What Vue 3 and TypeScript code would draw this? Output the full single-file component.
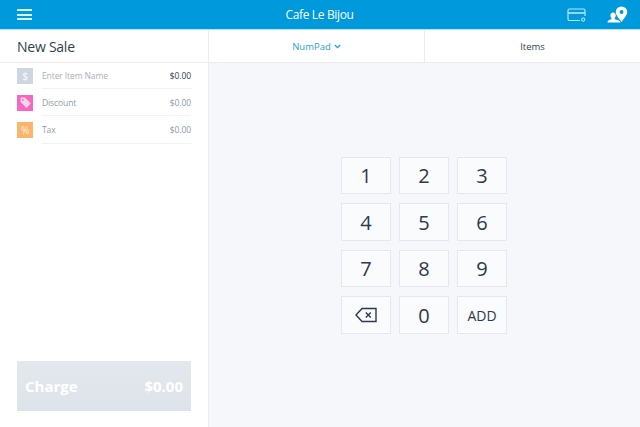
<script setup lang="ts">
interface Line { key: string; label: string; amount: string; cls: string }
const lines: Line[] = [
  { key: 'item', label: 'Enter Item Name', amount: '$0.00', cls: 'item' },
  { key: 'discount', label: 'Discount', amount: '$0.00', cls: 'discount' },
  { key: 'tax', label: 'Tax', amount: '$0.00', cls: 'tax' },
]
const keys = ['1', '2', '3', '4', '5', '6', '7', '8', '9', 'back', '0', 'ADD']
</script>

<template>
  <div class="app">
    <header class="topbar">
      <button class="burger" aria-label="Menu"><span></span><span></span><span></span></button>
      <div class="title">Cafe Le Bijou</div>
      <div class="top-icons">
        <svg width="19" height="14" viewBox="0 0 19 14" fill="none">
          <path d="M13 12.5H2.5A1.5 1.5 0 0 1 1 11V2.5A1.5 1.5 0 0 1 2.5 1h14A1.5 1.5 0 0 1 18 2.5V8" stroke="#b5e8fd" stroke-width="1.2"/>
          <path d="M1 4.2h17v1.6H1z" fill="#b5e8fd"/>
          <circle cx="16.2" cy="11.6" r="1.6" stroke="#b5e8fd" stroke-width="1.1"/>
        </svg>
        <svg width="21" height="17" viewBox="0 0 21 17">
          <path d="M0.5 16.5c0-1.9 1.4-2.4 2.9-3 1.2-.4 1.4-1 1-1.6-.6-.7-1-1.6-1-2.6 0-1.7 1.1-2.9 2.7-2.9s2.7 1.2 2.7 2.9c0 1-.4 1.9-1 2.6-.4.6-.2 1.2 1 1.6 1.5.6 4.7 1.1 4.7 3z" fill="#fff"/>
          <path fill-rule="evenodd" d="M14.5 0.4a5.7 5.7 0 0 1 5.7 5.7c0 3.5-3.5 6.5-5.7 10-2.2-3.500-5.700-6.500-5.700-10a5.700 5.700 0 0 1 5.700-5.700zm0 3.700a2 2 0 1 0 0 4 2 2 0 0 0 0-4z" fill="#fff" stroke="#0099dc" stroke-width="0.9" paint-order="stroke"/>
        </svg>
      </div>
    </header>
    <div class="body">
      <aside class="side">
        <div class="side-head">New Sale</div>
        <ul class="lines">
          <li v-for="l in lines" :key="l.key" class="line" :class="'row-' + l.key">
            <span class="badge" :class="l.cls">
              <template v-if="l.key === 'item'">$</template>
              <svg v-else-if="l.key === 'discount'" width="11" height="11" viewBox="0 0 11 11">
                <path fill-rule="evenodd" d="M1 0.6h4l5.4 5.4a.8.8 0 0 1 0 1.1L7.1 10.4a.8.8 0 0 1-1.1 0L0.6 5V1a.4.4 0 0 1 .4-.4zM2.9 2a.9.9 0 1 0 0 1.8.9.9 0 0 0 0-1.8z" fill="#fbd3ea"/>
              </svg>
              <template v-else>%</template>
            </span>
            <div class="line-main" :class="{ first: l.key === 'item' }">
              <span class="label">{{ l.label }}</span>
              <span class="amount">{{ l.amount }}</span>
            </div>
          </li>
        </ul>
        <button class="charge"><span>Charge</span><span>$0.00</span></button>
      </aside>
      <main class="main">
        <nav class="tabs">
          <div class="tab active">
            NumPad
            <svg width="7" height="5" viewBox="0 0 7 5" fill="none"><path d="M.8 1l2.7 2.7L6.2 1" stroke="#2a9ed6" stroke-width="1.3"/></svg>
          </div>
          <div class="tab">Items</div>
        </nav>
        <div class="pad-wrap">
          <div class="pad">
            <button v-for="k in keys" :key="k" class="key" :class="{ word: k === 'ADD' }">
              <svg v-if="k === 'back'" width="22" height="16" viewBox="0 0 22 16" fill="none">
                <path d="M7 1.500h14v13H7L1 8z" stroke="#2c3a49" stroke-width="1.4" stroke-linejoin="miter"/>
                <path d="M10.800 5.400l5 5M15.800 5.400l-5 5" stroke="#2c3a49" stroke-width="1.4"/>
              </svg>
              <template v-else>{{ k }}</template>
            </button>
          </div>
        </div>
      </main>
    </div>
  </div>
</template>

<style>
html, body { margin: 0; padding: 0; }
</style>

<style scoped>
.app {
  width: 640px;
  height: 427px;
  display: flex;
  flex-direction: column;
  overflow: hidden;
  background: #fff;
  font-family: "Open Sans", "Noto Sans", sans-serif;
  color: #2c3a49;
}
.topbar {
  height: 29px;
  flex: none;
  background: #0099dc;
  border-bottom: 1px solid #b5e4f8;
  display: grid;
  grid-template-columns: 1fr auto 1fr;
  align-items: center;
  padding: 0 12px 0 17px;
}
.burger {
  width: 15px;
  height: 11px;
  padding: 0;
  border: 0;
  background: none;
  display: flex;
  flex-direction: column;
  justify-content: space-between;
}
.burger span { display: block; height: 2px; background: #d6f3ff; }
.title {
  color: #fff;
  font-size: 12px;
  letter-spacing: -0.35px;
  margin-right: 6px;
}
.top-icons {
  display: flex;
  align-items: center;
  justify-content: flex-end;
  gap: 21px;
}
.body { flex: 1; display: flex; min-height: 0; }
.side {
  width: 209px;
  flex: none;
  box-sizing: border-box;
  display: flex;
  flex-direction: column;
  border-right: 1px solid #e9edf2;
}
.side-head {
  height: 32px;
  flex: none;
  padding-left: 17px;
  display: flex;
  align-items: center;
  font-size: 14px;
  letter-spacing: -0.25px;
  color: #333f4d;
  border-bottom: 1px solid #e9edf2;
}
.lines { list-style: none; margin: 0; padding: 0 17px; flex: 1; }
.line { display: flex; box-sizing: border-box; align-items: center; gap: 9px; }
.row-item { height: 26px; }
.row-discount { height: 27px; }
.row-tax { height: 28px; }
.badge {
  width: 16px;
  height: 16px;
  flex: none;
  display: flex;
  align-items: center;
  justify-content: center;
  font-size: 10px;
  font-weight: 600;
  color: #f3f5f8;
}
.badge.item { background: #cdd6e1; }
.badge.discount { background: #f767bd; }
.badge.tax { background: #fbb56a; color: #fde3c5; }
.line-main {
  flex: 1;
  align-self: stretch;
  display: flex;
  align-items: center;
  justify-content: space-between;
  border-bottom: 1px solid #f0f2f5;
  box-sizing: border-box;
  font-size: 8.5px;
  letter-spacing: -0.1px;
}
.label { color: #8e99a6; }
.amount { color: #8e99a6; }
.line-main.first .label { color: #a7b0bb; }
.line-main.first .amount { color: #36414e; }
.charge {
  flex: none;
  margin: 0 17px 16px;
  height: 50px;
  border: 0;
  padding: 0 8px;
  background: linear-gradient(#e4e8ee, #dde3ea);
  color: #fff;
  font: 700 15px "Open Sans", sans-serif;
  display: flex;
  align-items: center;
  justify-content: space-between;
}
.main { flex: 1; display: flex; flex-direction: column; min-width: 0; background: #f5f7fb; }
.tabs {
  height: 32px;
  flex: none;
  display: flex;
  background: #fff;
  border-bottom: 1px solid #e9edf2;
}
.tab {
  flex: 1;
  display: flex;
  align-items: center;
  justify-content: center;
  gap: 3px;
  font-size: 9.5px;
  color: #333f4d;
}
.tab.active { color: #2a9ed6; border-right: 1px solid #e9edf2; }
.pad-wrap { flex: 1; display: flex; align-items: center; justify-content: center; padding-right: 1px; }
.pad {
  display: grid;
  grid-template-columns: repeat(3, 50px);
  grid-auto-rows: 37.5px;
  column-gap: 8px;
  row-gap: 9px;
}
.key {
  box-sizing: border-box;
  border: 1px solid #e4e8ee;
  background: #fafbfd;
  padding: 1px 0 0;
  display: flex;
  align-items: center;
  justify-content: center;
  font: 400 20px "Open Sans", sans-serif;
  color: #2c3a49;
}
.key.word { font-size: 14px; }
</style>
